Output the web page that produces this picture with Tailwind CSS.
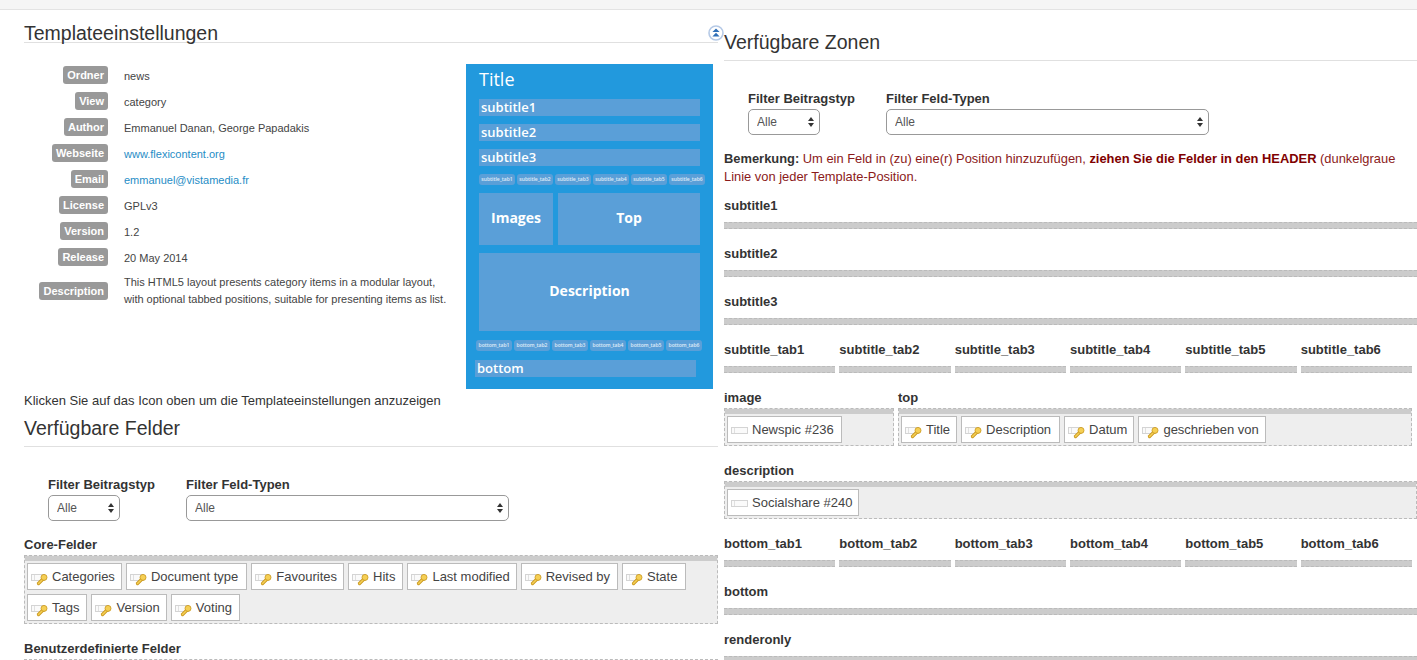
<!DOCTYPE html>
<html lang="de">
<head>
    <meta charset="UTF-8">
    <title>Templateeinstellungen</title>
    <script src="https://cdn.jsdelivr.net/npm/@tailwindcss/browser@4"></script>
</head>
<body class="bg-white font-['Liberation_Sans',Arial,sans-serif] text-[#333]">
<svg class="hidden">
    <symbol id="field" viewBox="0 0 20 16">
        <rect x="0.5" y="4.5" width="16" height="6" fill="#fafafa" stroke="#d4d4d4"/>
        <line x1="3.5" y1="5" x2="3.5" y2="10" stroke="#e0e0e0"/>
    </symbol>
    <symbol id="key" viewBox="0 0 20 16">
        <rect x="0.5" y="4.5" width="13" height="6" fill="#fafafa" stroke="#d4d4d4"/>
        <line x1="3.5" y1="5" x2="3.5" y2="10" stroke="#e0e0e0"/>
        <path d="M7.5 13.5 L12 9" fill="none" stroke="#c9971c" stroke-width="3.2" stroke-linecap="round"/>
        <path d="M7.5 13.5 L12 9" fill="none" stroke="#f5cf55" stroke-width="1.6" stroke-linecap="round"/>
        <circle cx="13" cy="7.4" r="3" fill="#f5cf55" stroke="#c9971c" stroke-width="0.8"/>
    </symbol>
    <symbol id="arrows" viewBox="0 0 6 12">
        <path d="M3 1 L6 5 L0 5 Z M3 11 L6 7 L0 7 Z" fill="#333"/>
    </symbol>
</svg>
<div class="h-[660px] overflow-hidden">
    <div class="h-[10px] bg-[#f5f5f5] border-b border-[#e3e3e3]"></div>

    <div class="flex">
        <!-- Left column -->
        <div class="relative w-[694px] ml-[24px] shrink-0">
            <svg class="absolute left-[684px] top-[15px] w-[16px] h-[16px]" viewBox="0 0 16 16">
                <circle cx="8" cy="8" r="7" fill="#fff" stroke="#b5c9e6" stroke-width="1.6"/>
                <path d="M8 3.4 L11.6 7 L4.4 7 Z M8 7.8 L11.6 11.6 L4.4 11.6 Z" fill="#2f6fb8"/>
            </svg>
            <h2 class="mt-[11px] h-[22px] border-b border-[#e0e0e0] text-[19.5px] leading-[24px] font-normal">Templateeinstellungen</h2>

            <div class="flex mt-[21px] h-[325px]">
                <div class="w-[442px] pt-[2px] text-[11px] text-[#444]">
                    <div class="flex items-center h-[18px] mb-[8px]"><div class="w-[84px] flex justify-end"><span class="bg-[#999] text-white font-bold rounded-[3px] px-[4px] leading-[18px]">Ordner</span></div><div class="ml-[16px] translate-y-px">news</div></div>
                    <div class="flex items-center h-[18px] mb-[8px]"><div class="w-[84px] flex justify-end"><span class="bg-[#999] text-white font-bold rounded-[3px] px-[4px] leading-[18px]">View</span></div><div class="ml-[16px] translate-y-px">category</div></div>
                    <div class="flex items-center h-[18px] mb-[8px]"><div class="w-[84px] flex justify-end"><span class="bg-[#999] text-white font-bold rounded-[3px] px-[4px] leading-[18px]">Author</span></div><div class="ml-[16px] translate-y-px">Emmanuel Danan, George Papadakis</div></div>
                    <div class="flex items-center h-[18px] mb-[8px]"><div class="w-[84px] flex justify-end"><span class="bg-[#999] text-white font-bold rounded-[3px] px-[4px] leading-[18px]">Webseite</span></div><a class="ml-[16px] translate-y-px text-[#1f8dc6]">www.flexicontent.org</a></div>
                    <div class="flex items-center h-[18px] mb-[8px]"><div class="w-[84px] flex justify-end"><span class="bg-[#999] text-white font-bold rounded-[3px] px-[4px] leading-[18px]">Email</span></div><a class="ml-[16px] translate-y-px text-[#1f8dc6]">emmanuel@vistamedia.fr</a></div>
                    <div class="flex items-center h-[18px] mb-[8px]"><div class="w-[84px] flex justify-end"><span class="bg-[#999] text-white font-bold rounded-[3px] px-[4px] leading-[18px]">License</span></div><div class="ml-[16px] translate-y-px">GPLv3</div></div>
                    <div class="flex items-center h-[18px] mb-[8px]"><div class="w-[84px] flex justify-end"><span class="bg-[#999] text-white font-bold rounded-[3px] px-[4px] leading-[18px]">Version</span></div><div class="ml-[16px] translate-y-px">1.2</div></div>
                    <div class="flex items-center h-[18px] mb-[8px]"><div class="w-[84px] flex justify-end"><span class="bg-[#999] text-white font-bold rounded-[3px] px-[4px] leading-[18px]">Release</span></div><div class="ml-[16px] translate-y-px">20 May 2014</div></div>
                    <div class="flex items-center h-[34px]"><div class="w-[84px] flex justify-end shrink-0"><span class="bg-[#999] text-white font-bold rounded-[3px] px-[4px] leading-[18px]">Description</span></div><div class="ml-[16px] leading-[17px] whitespace-nowrap">This HTML5 layout presents category items in a modular layout,<br>with optional tabbed positions, suitable for presenting items as list.</div></div>
                </div>

                <!-- Layout preview -->
                <div class="w-[247px] h-[325px] bg-[#2299dd] text-white font-['Open_Sans',sans-serif] pl-[13px] shrink-0">
                    <div class="text-[18px] leading-[24px] pt-[3px] h-[35px]">Title</div>
                    <div class="w-[221px] h-[17px] bg-[#5a9fd8] text-[13px] font-semibold leading-[17px] pl-[2px] mb-[8px]">subtitle1</div>
                    <div class="w-[221px] h-[17px] bg-[#5a9fd8] text-[13px] font-semibold leading-[17px] pl-[2px] mb-[8px]">subtitle2</div>
                    <div class="w-[221px] h-[17px] bg-[#5a9fd8] text-[13px] font-semibold leading-[17px] pl-[2px] mb-[8px]">subtitle3</div>
                    <div class="flex gap-[2px] w-[226px] h-[11px] mb-[8px] text-[5px] font-semibold leading-[11px] text-center text-white/80">
                        <div class="flex-1 bg-[#5a9fd8] rounded-[3px]">subtitle_tab1</div>
                        <div class="flex-1 bg-[#5a9fd8] rounded-[3px]">subtitle_tab2</div>
                        <div class="flex-1 bg-[#5a9fd8] rounded-[3px]">subtitle_tab3</div>
                        <div class="flex-1 bg-[#5a9fd8] rounded-[3px]">subtitle_tab4</div>
                        <div class="flex-1 bg-[#5a9fd8] rounded-[3px]">subtitle_tab5</div>
                        <div class="flex-1 bg-[#5a9fd8] rounded-[3px]">subtitle_tab6</div>
                    </div>
                    <div class="flex gap-[5px] w-[221px] h-[52px] mb-[8px] text-[14px] font-bold leading-[50px] text-center">
                        <div class="w-[74px] bg-[#5a9fd8]">Images</div>
                        <div class="flex-1 bg-[#5a9fd8]">Top</div>
                    </div>
                    <div class="w-[221px] h-[78px] bg-[#5a9fd8] text-[14px] font-bold leading-[76px] text-center mb-[9px]">Description</div>
                    <div class="flex gap-[2px] w-[226px] h-[11px] -ml-[3px] mb-[9px] text-[5px] font-semibold leading-[11px] text-center text-white/80">
                        <div class="flex-1 bg-[#5a9fd8] rounded-[3px]">bottom_tab1</div>
                        <div class="flex-1 bg-[#5a9fd8] rounded-[3px]">bottom_tab2</div>
                        <div class="flex-1 bg-[#5a9fd8] rounded-[3px]">bottom_tab3</div>
                        <div class="flex-1 bg-[#5a9fd8] rounded-[3px]">bottom_tab4</div>
                        <div class="flex-1 bg-[#5a9fd8] rounded-[3px]">bottom_tab5</div>
                        <div class="flex-1 bg-[#5a9fd8] rounded-[3px]">bottom_tab6</div>
                    </div>
                    <div class="w-[221px] h-[17px] -ml-[4px] bg-[#5a9fd8] text-[13px] font-semibold leading-[17px] pl-[2px]">bottom</div>
                </div>
            </div>

            <p class="mt-[2px] pt-[1px] h-[18px] text-[13px] leading-[18px]">Klicken Sie auf das Icon oben um die Templateeinstellungen anzuzeigen</p>

            <h2 class="mt-[7px] pb-[6px] border-b border-[#e0e0e0] text-[19.5px] leading-[24px] font-normal">Verfügbare Felder</h2>

            <div class="flex mt-[28px] ml-[24px] text-[13px]">
                <div class="w-[138px]">
                    <div class="font-bold h-[18px] pt-[1px] leading-[18px]">Filter Beitragstyp</div>
                    <div class="relative w-[72px] h-[26px] mt-[2px]">
                        <select class="appearance-none w-full h-full border border-[#999] rounded-[5px] bg-white pl-[8px] text-[12px] text-[#555]"><option>Alle</option></select>
                        <svg class="absolute right-[6px] top-[7px] w-[6px] h-[12px]"><use href="#arrows"/></svg>
                    </div>
                </div>
                <div>
                    <div class="font-bold h-[18px] pt-[1px] leading-[18px]">Filter Feld-Typen</div>
                    <div class="relative w-[323px] h-[26px] mt-[2px]">
                        <select class="appearance-none w-full h-full border border-[#999] rounded-[5px] bg-white pl-[8px] text-[12px] text-[#555]"><option>Alle</option></select>
                        <svg class="absolute right-[6px] top-[7px] w-[6px] h-[12px]"><use href="#arrows"/></svg>
                    </div>
                </div>
            </div>

            <div class="mt-[14px] h-[18px] pt-[1px] text-[13px] font-bold leading-[18px]">Core-Felder</div>
            <div class="mt-[2px] border border-dashed border-[#bbb] bg-[#eee]">
                <div class="h-[5px] bg-[#ccc]"></div>
                <div class="flex flex-wrap gap-x-[4px] gap-y-[4px] p-[2px] text-[13px] leading-[25px] text-[#444]">
                    <div class="h-[27px] border border-[#bbb] bg-white flex pr-[6px]"><svg class="w-[20px] h-[16px] mt-[6px] ml-[3px] mr-[1px]"><use href="#key"/></svg>Categories</div>
                    <div class="h-[27px] border border-[#bbb] bg-white flex pr-[8px]"><svg class="w-[20px] h-[16px] mt-[6px] ml-[3px] mr-[1px]"><use href="#key"/></svg>Document type</div>
                    <div class="h-[27px] border border-[#bbb] bg-white flex pr-[6px]"><svg class="w-[20px] h-[16px] mt-[6px] ml-[3px] mr-[1px]"><use href="#key"/></svg>Favourites</div>
                    <div class="h-[27px] border border-[#bbb] bg-white flex pr-[7px]"><svg class="w-[20px] h-[16px] mt-[6px] ml-[3px] mr-[1px]"><use href="#key"/></svg>Hits</div>
                    <div class="h-[27px] border border-[#bbb] bg-white flex pr-[6px]"><svg class="w-[20px] h-[16px] mt-[6px] ml-[3px] mr-[1px]"><use href="#key"/></svg>Last modified</div>
                    <div class="h-[27px] border border-[#bbb] bg-white flex pr-[7px]"><svg class="w-[20px] h-[16px] mt-[6px] ml-[3px] mr-[1px]"><use href="#key"/></svg>Revised by</div>
                    <div class="h-[27px] border border-[#bbb] bg-white flex pr-[8px]"><svg class="w-[20px] h-[16px] mt-[6px] ml-[3px] mr-[1px]"><use href="#key"/></svg>State</div>
                    <div class="h-[27px] border border-[#bbb] bg-white flex pr-[7px]"><svg class="w-[20px] h-[16px] mt-[6px] ml-[3px] mr-[1px]"><use href="#key"/></svg>Tags</div>
                    <div class="h-[27px] border border-[#bbb] bg-white flex pr-[6px]"><svg class="w-[20px] h-[16px] mt-[6px] ml-[3px] mr-[1px]"><use href="#key"/></svg>Version</div>
                    <div class="h-[27px] border border-[#bbb] bg-white flex pr-[7px]"><svg class="w-[20px] h-[16px] mt-[6px] ml-[3px] mr-[1px]"><use href="#key"/></svg>Voting</div>
                </div>
            </div>

            <div class="mt-[15px] h-[18px] pt-[1px] text-[13px] font-bold leading-[18px]">Benutzerdefinierte Felder</div>
            <div class="mt-[2px] border-t border-dashed border-[#bbb] h-[4px]"></div>
        </div>

        <!-- Right column -->
        <div class="ml-[6px] flex-1 min-w-0">
            <h2 class="mt-[20px] pb-[6px] border-b border-[#e0e0e0] text-[19.5px] leading-[24px] font-normal">Verfügbare Zonen</h2>

            <div class="flex mt-[28px] ml-[24px] text-[13px]">
                <div class="w-[138px]">
                    <div class="font-bold h-[18px] pt-[1px] leading-[18px]">Filter Beitragstyp</div>
                    <div class="relative w-[72px] h-[26px] mt-[2px]">
                        <select class="appearance-none w-full h-full border border-[#999] rounded-[5px] bg-white pl-[8px] text-[12px] text-[#555]"><option>Alle</option></select>
                        <svg class="absolute right-[6px] top-[7px] w-[6px] h-[12px]"><use href="#arrows"/></svg>
                    </div>
                </div>
                <div>
                    <div class="font-bold h-[18px] pt-[1px] leading-[18px]">Filter Feld-Typen</div>
                    <div class="relative w-[323px] h-[26px] mt-[2px]">
                        <select class="appearance-none w-full h-full border border-[#999] rounded-[5px] bg-white pl-[8px] text-[12px] text-[#555]"><option>Alle</option></select>
                        <svg class="absolute right-[6px] top-[7px] w-[6px] h-[12px]"><use href="#arrows"/></svg>
                    </div>
                </div>
            </div>

            <p class="mt-[14px] h-[36px] pt-[1px] text-[12.9px] leading-[18px] text-[#8b1a1a] pr-[10px]"><strong class="text-[#333]">Bemerkung:</strong> Um ein Feld in (zu) eine(r) Position hinzuzufügen, <strong class="text-[#800000]">ziehen Sie die Felder in den HEADER</strong> (dunkelgraue Linie von jeder Template-Position.</p>

            <div class="mt-[11px] h-[18px] pt-[1px] text-[13px] font-bold leading-[18px]">subtitle1</div>
            <div class="mt-[8px] h-[7px] bg-[#ccc] border-y border-dashed border-[#bbb]"></div>
            <div class="mt-[15px] h-[18px] pt-[1px] text-[13px] font-bold leading-[18px]">subtitle2</div>
            <div class="mt-[8px] h-[7px] bg-[#ccc] border-y border-dashed border-[#bbb]"></div>
            <div class="mt-[15px] h-[18px] pt-[1px] text-[13px] font-bold leading-[18px]">subtitle3</div>
            <div class="mt-[8px] h-[7px] bg-[#ccc] border-y border-dashed border-[#bbb]"></div>

            <div class="mt-[15px] w-[688px] grid grid-cols-6 gap-x-[4px] text-[13px] font-bold leading-[18px]">
                <div><div class="h-[18px] pt-[1px]">subtitle_tab1</div><div class="mt-[8px] h-[7px] bg-[#ccc] border-y border-dashed border-[#bbb]"></div></div>
                <div><div class="h-[18px] pt-[1px]">subtitle_tab2</div><div class="mt-[8px] h-[7px] bg-[#ccc] border-y border-dashed border-[#bbb]"></div></div>
                <div><div class="h-[18px] pt-[1px]">subtitle_tab3</div><div class="mt-[8px] h-[7px] bg-[#ccc] border-y border-dashed border-[#bbb]"></div></div>
                <div><div class="h-[18px] pt-[1px]">subtitle_tab4</div><div class="mt-[8px] h-[7px] bg-[#ccc] border-y border-dashed border-[#bbb]"></div></div>
                <div><div class="h-[18px] pt-[1px]">subtitle_tab5</div><div class="mt-[8px] h-[7px] bg-[#ccc] border-y border-dashed border-[#bbb]"></div></div>
                <div><div class="h-[18px] pt-[1px]">subtitle_tab6</div><div class="mt-[8px] h-[7px] bg-[#ccc] border-y border-dashed border-[#bbb]"></div></div>
            </div>

            <div class="mt-[15px] flex gap-[4px] w-[688px]">
                <div class="w-[170px]">
                    <div class="h-[18px] pt-[1px] text-[13px] font-bold leading-[18px]">image</div>
                    <div class="mt-[2px] border border-dashed border-[#bbb] bg-[#eee]">
                        <div class="h-[5px] bg-[#ccc]"></div>
                        <div class="flex p-[2px] text-[13px] leading-[25px] text-[#444]">
                            <div class="h-[27px] border border-[#bbb] bg-white flex pr-[7px]"><svg class="w-[20px] h-[16px] mt-[6px] ml-[3px] mr-[1px]"><use href="#field"/></svg>Newspic #236</div>
                        </div>
                    </div>
                </div>
                <div class="flex-1">
                    <div class="h-[18px] pt-[1px] text-[13px] font-bold leading-[18px]">top</div>
                    <div class="mt-[2px] border border-dashed border-[#bbb] bg-[#eee]">
                        <div class="h-[5px] bg-[#ccc]"></div>
                        <div class="flex gap-[4px] p-[2px] text-[13px] leading-[25px] text-[#444]">
                            <div class="h-[27px] border border-[#bbb] bg-white flex pr-[6px]"><svg class="w-[20px] h-[16px] mt-[6px] ml-[3px] mr-[1px]"><use href="#key"/></svg>Title</div>
                            <div class="h-[27px] border border-[#bbb] bg-white flex pr-[8px]"><svg class="w-[20px] h-[16px] mt-[6px] ml-[3px] mr-[1px]"><use href="#key"/></svg>Description</div>
                            <div class="h-[27px] border border-[#bbb] bg-white flex pr-[6px]"><svg class="w-[20px] h-[16px] mt-[6px] ml-[3px] mr-[1px]"><use href="#key"/></svg>Datum</div>
                            <div class="h-[27px] border border-[#bbb] bg-white flex pr-[6px]"><svg class="w-[20px] h-[16px] mt-[6px] ml-[3px] mr-[1px]"><use href="#key"/></svg>geschrieben von</div>
                        </div>
                    </div>
                </div>
            </div>

            <div class="mt-[15px] h-[18px] pt-[1px] text-[13px] font-bold leading-[18px]">description</div>
            <div class="mt-[2px] border border-dashed border-[#bbb] bg-[#eee]">
                <div class="h-[5px] bg-[#ccc]"></div>
                <div class="flex p-[2px] text-[13px] leading-[25px] text-[#444]">
                    <div class="h-[27px] border border-[#bbb] bg-white flex pr-[6px]"><svg class="w-[20px] h-[16px] mt-[6px] ml-[3px] mr-[1px]"><use href="#field"/></svg>Socialshare #240</div>
                </div>
            </div>

            <div class="mt-[15px] w-[688px] grid grid-cols-6 gap-x-[4px] text-[13px] font-bold leading-[18px]">
                <div><div class="h-[18px] pt-[1px]">bottom_tab1</div><div class="mt-[8px] h-[7px] bg-[#ccc] border-y border-dashed border-[#bbb]"></div></div>
                <div><div class="h-[18px] pt-[1px]">bottom_tab2</div><div class="mt-[8px] h-[7px] bg-[#ccc] border-y border-dashed border-[#bbb]"></div></div>
                <div><div class="h-[18px] pt-[1px]">bottom_tab3</div><div class="mt-[8px] h-[7px] bg-[#ccc] border-y border-dashed border-[#bbb]"></div></div>
                <div><div class="h-[18px] pt-[1px]">bottom_tab4</div><div class="mt-[8px] h-[7px] bg-[#ccc] border-y border-dashed border-[#bbb]"></div></div>
                <div><div class="h-[18px] pt-[1px]">bottom_tab5</div><div class="mt-[8px] h-[7px] bg-[#ccc] border-y border-dashed border-[#bbb]"></div></div>
                <div><div class="h-[18px] pt-[1px]">bottom_tab6</div><div class="mt-[8px] h-[7px] bg-[#ccc] border-y border-dashed border-[#bbb]"></div></div>
            </div>

            <div class="mt-[15px] h-[18px] pt-[1px] text-[13px] font-bold leading-[18px]">bottom</div>
            <div class="mt-[8px] h-[7px] bg-[#ccc] border-y border-dashed border-[#bbb]"></div>
            <div class="mt-[15px] h-[18px] pt-[1px] text-[13px] font-bold leading-[18px]">renderonly</div>
            <div class="mt-[8px] h-[7px] bg-[#ccc] border-y border-dashed border-[#bbb]"></div>
        </div>
    </div>
</div>
</body>
</html>
